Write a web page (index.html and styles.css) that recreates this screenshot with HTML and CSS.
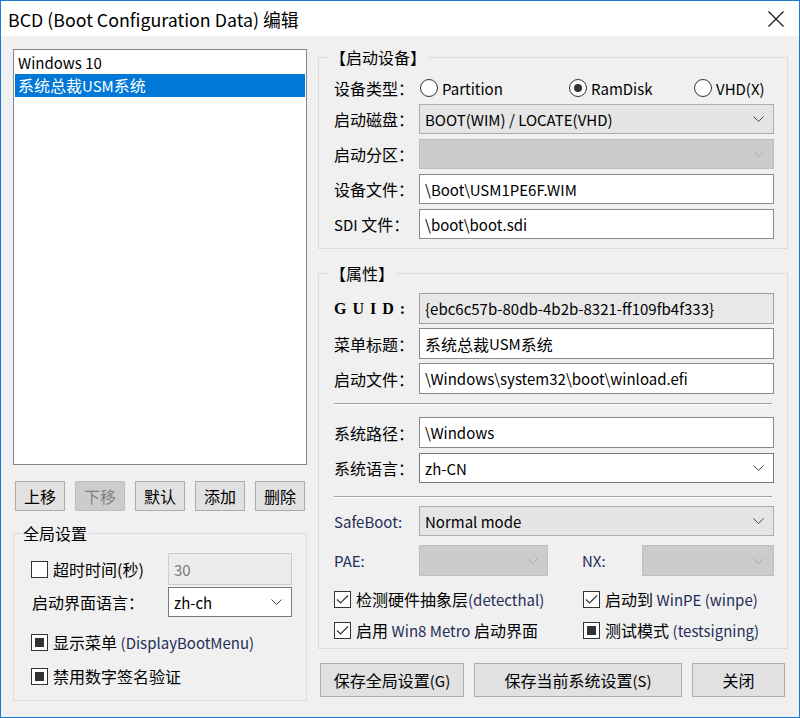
FILE: index.html
```html
<!DOCTYPE html>
<html lang="zh-CN">
<head>
<meta charset="utf-8">
<title>BCD 编辑</title>
<link rel="stylesheet" href="styles.css">
</head>
<body>
<div class="window">
  <div class="titlebar">
    <span class="title">BCD (Boot Configuration Data) 编辑</span>
    <svg class="close" width="16" height="16" viewBox="0 0 16 16"><path d="M0.5 0.5 L15.5 15.5 M15.5 0.5 L0.5 15.5" stroke="#111" stroke-width="1.1" fill="none"/></svg>
  </div>
  <div class="client">
    <div class="left">
      <div class="listbox">
        <div class="item"><span class="l">Windows 10</span></div>
        <div class="item sel">系统总裁<span class="l">USM</span>系统</div>
      </div>
      <div class="btnrow">
        <button class="btn">上移</button>
        <button class="btn" disabled>下移</button>
        <button class="btn">默认</button>
        <button class="btn">添加</button>
        <button class="btn">删除</button>
      </div>
      <fieldset class="group gleft">
        <legend>全局设置</legend>
        <div class="lrow r1">
          <div class="chk"><span class="box"></span><span>超时时间(秒)</span></div>
          <div class="tb dis small lat">30</div>
        </div>
        <div class="lrow r2">
          <span class="llbl">启动界面语言：</span>
          <div class="combo edit small lat"><span>zh-ch</span><svg class="arr" width="11" height="6" viewBox="0 0 11 6"><path d="M0.5 0.5 L5.5 5.5 L10.5 0.5" stroke="#444" fill="none"/></svg></div>
        </div>
        <div class="chk r3"><span class="box ind"></span><span>显示菜单 <span class="en">(DisplayBootMenu)</span></span></div>
        <div class="chk r4"><span class="box ind"></span><span>禁用数字签名验证</span></div>
      </fieldset>
    </div>
    <div class="right">
      <fieldset class="group g1">
        <legend class="blg">【启动设备】</legend>
        <div class="rows">
          <div class="row radios">
            <span class="lbl">设备类型：</span>
            <div class="radiogrid">
              <div class="radio"><span class="circ"></span><span class="l">Partition</span></div>
              <div class="radio"><span class="circ on"></span><span class="l">RamDisk</span></div>
              <div class="radio"><span class="circ"></span><span class="l">VHD(X)</span></div>
            </div>
          </div>
          <div class="row">
            <span class="lbl">启动磁盘：</span>
            <div class="combo ro lat"><span>BOOT(WIM) / LOCATE(VHD)</span><svg class="arr" width="11" height="6" viewBox="0 0 11 6"><path d="M0.5 0.5 L5.5 5.5 L10.5 0.5" stroke="#444" fill="none"/></svg></div>
          </div>
          <div class="row">
            <span class="lbl">启动分区：</span>
            <div class="combo dis"><span></span><svg class="arr" width="11" height="6" viewBox="0 0 11 6"><path d="M0.5 0.5 L5.5 5.5 L10.5 0.5" stroke="#a8a8a8" fill="none"/></svg></div>
          </div>
          <div class="row">
            <span class="lbl">设备文件：</span>
            <div class="tb lat">\Boot\USM1PE6F.WIM</div>
          </div>
          <div class="row">
            <span class="lbl"><span class="l">SDI</span> 文件：</span>
            <div class="tb lat">\boot\boot.sdi</div>
          </div>
        </div>
      </fieldset>

      <fieldset class="group g2">
        <legend class="blg">【属性】</legend>
        <div class="rows2">
          <div class="row h31">
            <span class="lbl guid">GUID:</span>
            <div class="tb ro lat">{ebc6c57b-80db-4b2b-8321-ff109fb4f333}</div>
          </div>
          <div class="row h31 mt4">
            <span class="lbl">菜单标题：</span>
            <div class="tb">系统总裁<span class="l">USM</span>系统</div>
          </div>
          <div class="row h31 mt4">
            <span class="lbl">启动文件：</span>
            <div class="tb lat">\Windows\system32\boot\winload.efi</div>
          </div>
          <div class="sep s1"></div>
          <div class="row h31 mt12">
            <span class="lbl">系统路径：</span>
            <div class="tb lat">\Windows</div>
          </div>
          <div class="row mt5">
            <span class="lbl">系统语言：</span>
            <div class="combo edit lat"><span>zh-CN</span><svg class="arr" width="11" height="6" viewBox="0 0 11 6"><path d="M0.5 0.5 L5.5 5.5 L10.5 0.5" stroke="#444" fill="none"/></svg></div>
          </div>
          <div class="sep s2"></div>
          <div class="row mt8">
            <span class="lbl en">SafeBoot:</span>
            <div class="combo ro lat"><span>Normal mode</span><svg class="arr" width="11" height="6" viewBox="0 0 11 6"><path d="M0.5 0.5 L5.5 5.5 L10.5 0.5" stroke="#444" fill="none"/></svg></div>
          </div>
          <div class="row h31 mt9">
            <span class="lbl en">PAE:</span>
            <div class="combo dis pae"><span></span><svg class="arr" width="11" height="6" viewBox="0 0 11 6"><path d="M0.5 0.5 L5.5 5.5 L10.5 0.5" stroke="#a8a8a8" fill="none"/></svg></div>
            <span class="nxlbl en">NX:</span>
            <div class="combo dis"><span></span><svg class="arr" width="11" height="6" viewBox="0 0 11 6"><path d="M0.5 0.5 L5.5 5.5 L10.5 0.5" stroke="#a8a8a8" fill="none"/></svg></div>
          </div>
          <div class="chkgrid">
            <div class="chk"><span class="box on"><svg width="13" height="11" viewBox="0 0 13 11"><path d="M1 5.5 L4.5 9 L12 1.5" stroke="#333" stroke-width="1.2" fill="none"/></svg></span><span>检测硬件抽象层<span class="en">(detecthal)</span></span></div>
            <div class="chk"><span class="box on"><svg width="13" height="11" viewBox="0 0 13 11"><path d="M1 5.5 L4.5 9 L12 1.5" stroke="#333" stroke-width="1.2" fill="none"/></svg></span><span>启动到 <span class="en">WinPE (winpe)</span></span></div>
            <div class="chk"><span class="box on"><svg width="13" height="11" viewBox="0 0 13 11"><path d="M1 5.5 L4.5 9 L12 1.5" stroke="#333" stroke-width="1.2" fill="none"/></svg></span><span>启用 <span class="en">Win8 Metro</span> 启动界面</span></div>
            <div class="chk"><span class="box ind"></span><span>测试模式 <span class="en">(testsigning)</span></span></div>
          </div>
        </div>
      </fieldset>

      <div class="bottombtns">
        <button class="btn b1">保存全局设置<span class="l">(G)</span></button>
        <button class="btn b2">保存当前系统设置<span class="l">(S)</span></button>
        <button class="btn b3">关闭</button>
      </div>
    </div>
  </div>
</div>
</body>
</html>
```

FILE: styles.css
```css
* { box-sizing: border-box; }

body {
  margin: 0;
  font-family: "Noto Sans CJK SC", "Noto Sans", sans-serif;
  font-size: 16px;
  color: #000;
  background: #fff;
}

.l, .lat, .en { font-size: 15px; }

.window {
  width: 800px;
  height: 718px;
  border: 1px solid #1a7ad4;
  background: #f0f0f0;
  display: flex;
  flex-direction: column;
}

.titlebar {
  height: 35px;
  flex-shrink: 0;
  background: #fff;
  display: flex;
  align-items: center;
  justify-content: space-between;
  padding: 0 15px 0 7px;
}

.title {
  font-size: 17.8px;
  line-height: 22px;
}

.close { display: block; margin-top: 1px; }

.client {
  flex: 1;
  display: flex;
  gap: 11px;
  padding: 11px 0 0 12px;
}

.left {
  width: 294px;
  padding-top: 2px;
  display: flex;
  flex-direction: column;
}

.listbox {
  height: 416px;
  border: 1px solid #828790;
  background: #fff;
  padding: 1px;
}

.item {
  height: 23px;
  line-height: 23px;
  padding-left: 3px;
  font-size: 16px;
  white-space: nowrap;
}

.item.sel {
  background: #0078d7;
  color: #fff;
}

.btnrow {
  display: flex;
  gap: 10px;
  margin-top: 16px;
  padding-left: 2px;
}

.btn {
  width: 50px;
  height: 30px;
  border: 1px solid #adadad;
  background: #e1e1e1;
  font-family: inherit;
  font-size: 16px;
  color: #000;
  padding: 0;
  line-height: 20px;
}

.btn:disabled {
  background: #cccccc;
  border-color: #bfbfbf;
  color: #838383;
}

.group {
  margin: 0;
  border: 1px solid #dcdcdc;
  min-width: 0;
}

.group legend {
  line-height: 20px;
  font-size: 16px;
  padding: 0 2px;
}

.gleft {
  margin-top: 12px;
  height: 178px;
  padding: 10px 14px 0 17px;
}

.gleft legend {
  margin-left: -10px;
}

.lrow {
  display: flex;
  align-items: center;
  justify-content: space-between;
}

.r1 { height: 32px; }
.r2 { height: 30px; margin-top: 2px; }
.r3 { margin-top: 14px; }
.r4 { margin-top: 12px; }

.llbl { padding-left: 1px; }

.chk {
  display: flex;
  align-items: center;
  height: 22px;
  white-space: nowrap;
}

.box {
  width: 17px;
  height: 17px;
  border: 1px solid #333;
  background: #fff;
  margin-right: 5px;
  flex-shrink: 0;
  display: flex;
  align-items: center;
  justify-content: center;
}

.box.ind::after {
  content: "";
  width: 9px;
  height: 9px;
  background: #333;
}

.en { color: #262e58; }

.tb {
  height: 100%;
  flex: 1;
  border: 1px solid #8a8a8a;
  background: #fff;
  padding: 0 5px;
  display: flex;
  align-items: center;
  white-space: nowrap;
}

.tb.small, .combo.small { flex: none; width: 124px; }

.tb.dis {
  background: #ececec;
  border-color: #cccccc;
  color: #7a7a7a;
}

.tb.ro {
  background: #e8e8e8;
  border-color: #a0a0a0;
}

.combo {
  height: 100%;
  flex: 1;
  display: flex;
  align-items: center;
  justify-content: space-between;
  padding: 0 9px 0 5px;
  border: 1px solid #acacac;
  white-space: nowrap;
}

.combo.ro { background: #e5e5e5; }
.combo.dis { background: #cccccc; border-color: #bfbfbf; }
.combo.edit { background: #fff; border-color: #7a7a7a; }
.combo .arr { display: block; flex-shrink: 0; }

.right {
  width: 470px;
  display: flex;
  flex-direction: column;
}

.g1 {
  padding: 10px 13px 9px 15px;
}

.blg { margin-left: -6px; }

.rows {
  display: flex;
  flex-direction: column;
  gap: 5px;
}

.row {
  display: flex;
  align-items: center;
  height: 30px;
}

.row.radios { height: 22px; }

.lbl {
  width: 85px;
  flex-shrink: 0;
  white-space: nowrap;
}

.radiogrid {
  display: grid;
  grid-template-columns: 149px 125px auto;
  padding-left: 1px;
}

.radio {
  display: flex;
  align-items: center;
}

.circ {
  width: 18px;
  height: 18px;
  border: 1px solid #333;
  border-radius: 50%;
  background: #fff;
  margin-right: 4px;
  display: flex;
  align-items: center;
  justify-content: center;
}

.circ.on::after {
  content: "";
  width: 8px;
  height: 8px;
  border-radius: 50%;
  background: #333;
}

.g2 {
  margin-top: 14px;
  padding: 10px 13px 7px 15px;
}

.rows2 { display: flex; flex-direction: column; }

.h31 { height: 31px; }
.mt4 { margin-top: 4px; }
.mt5 { margin-top: 5px; }
.mt8 { margin-top: 8px; }
.mt9 { margin-top: 9px; }
.mt12 { margin-top: 12px; }

.sep {
  height: 2px;
  border-top: 1px solid #a0a0a0;
  border-bottom: 1px solid #fff;
  margin-right: 2px;
}

.s1 { margin-top: 9px; }
.s2 { margin-top: 13px; }

.guid {
  font-family: "Liberation Serif", serif;
  font-weight: bold;
  letter-spacing: 6px;
}

.combo.pae { flex: none; width: 129px; }

.nxlbl {
  width: 60px;
  margin-left: 34px;
  flex-shrink: 0;
}

.chkgrid {
  display: grid;
  grid-template-columns: 249px auto;
  row-gap: 9px;
  margin-top: 12px;
}

.bottombtns {
  display: flex;
  gap: 10px;
  margin-top: 14px;
  padding-left: 2px;
}

.bottombtns .btn { height: 34px; }
.b1 { width: 144px; }
.b2 { width: 208px; }
.b3 { width: 93px; }
```
